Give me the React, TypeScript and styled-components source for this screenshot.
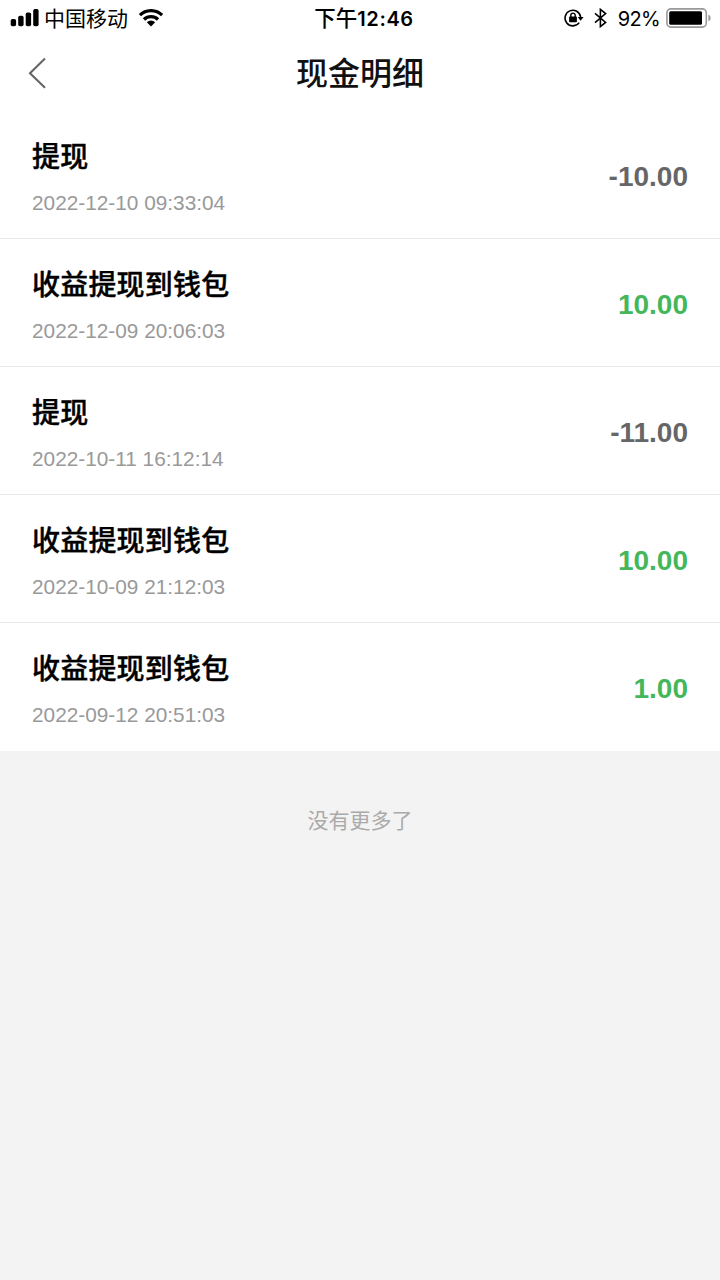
import React from "react";
import styled, { createGlobalStyle } from "styled-components";

const GlobalStyle = createGlobalStyle`
  * { box-sizing: border-box; }
  body {
    margin: 0;
    background: #f3f3f3;
    font-family: "Liberation Sans", "Noto Sans CJK SC", sans-serif;
  }
`;

const Screen = styled.div`
  min-height: 1280px;
  background: #f3f3f3;
`;

const StatusBar = styled.header`
  display: grid;
  grid-template-columns: 1fr auto 1fr;
  grid-template-rows: 36px;
  align-items: center;
  height: 36px;
  padding: 0 9px 0 10px;
  background: #fff;
  color: #000;
  font-family: Inter, "Noto Sans CJK SC", sans-serif;
  font-size: 20px;
  line-height: 36px;
  white-space: nowrap;
`;

const StatusGroup = styled.div<{ $end?: boolean }>`
  display: flex;
  align-items: center;
  height: 36px;
  justify-content: ${(p) => (p.$end ? "flex-end" : "flex-start")};
  svg { display: block; flex: none; }
`;

const Carrier = styled.span`
  margin: 0 10px 0 5px;
  padding-top: 1px;
  font-size: 21px;
`;

const Clock = styled.div`
  padding-left: 7px;
  font-weight: 500;
  font-size: 21.5px;
`;

const ClockDigits = styled.span`
  font-weight: 600;
  font-size: 20px;
  letter-spacing: 0.6px;
`;

const Percent = styled.span`
  margin: 0 6px 0 11px;
  padding-top: 1px;
  font-size: 20px;
  letter-spacing: -0.7px;
`;

const NavBar = styled.nav`
  display: grid;
  grid-template-columns: 80px 1fr 80px;
  align-items: center;
  height: 75px;
  background: #fff;
`;

const BackButton = styled.button`
  display: flex;
  padding: 0 0 0 27px;
  border: 0;
  background: none;
`;

const Heading = styled.h1`
  margin: 0;
  padding-top: 1px;
  color: #111;
  font-size: 32px;
  font-weight: 500;
  line-height: 48px;
  text-align: center;
`;

const List = styled.ul`
  margin: 0;
  padding: 0;
  list-style: none;
  background: #fff;
`;

const Row = styled.li`
  display: flex;
  align-items: center;
  justify-content: space-between;
  height: 128px;
  padding: 0 32px;
  border-bottom: 1px solid #e8e8e8;
  &:last-child { border-bottom-color: #fff; }
`;

const Details = styled.div`
  display: flex;
  flex-direction: column;
  gap: 10px;
  padding-top: 7px;
`;

const Title = styled.span`
  color: #000;
  font-size: 28px;
  font-weight: 500;
  line-height: 40px;
  letter-spacing: 0.2px;
  -webkit-text-stroke: 0.4px #000;
`;

const Time = styled.time`
  color: #999;
  font-size: 20.8px;
  line-height: 30px;
`;

const Amount = styled.span<{ $income: boolean }>`
  padding-top: 4px;
  color: ${(p) => (p.$income ? "#44b75b" : "#666")};
  font-size: 28px;
  font-weight: 700;
  line-height: 40px;
`;

const EndNote = styled.p`
  margin: 0;
  padding-top: 55px;
  color: #aaa;
  font-size: 21px;
  line-height: 30px;
  text-align: center;
`;

const BluetoothSvg = styled.svg`
  margin-left: 10px;
`;

const records = [
  { title: "提现", time: "2022-12-10 09:33:04", amount: "-10.00" },
  { title: "收益提现到钱包", time: "2022-12-09 20:06:03", amount: "10.00" },
  { title: "提现", time: "2022-10-11 16:12:14", amount: "-11.00" },
  { title: "收益提现到钱包", time: "2022-10-09 21:12:03", amount: "10.00" },
  { title: "收益提现到钱包", time: "2022-09-12 20:51:03", amount: "1.00" },
];

const SignalIcon = () => (
  <svg width="29" height="18" viewBox="0 0 29 18">
    <rect x="0.7" y="10" width="5.4" height="7.2" rx="1.8" />
    <rect x="8.2" y="6.7" width="5.4" height="10.5" rx="1.8" />
    <rect x="15.7" y="3.4" width="5.4" height="13.8" rx="1.8" />
    <rect x="23.2" y="0" width="5.4" height="17.2" rx="1.8" />
  </svg>
);

const WifiIcon = () => (
  <svg width="26" height="18" viewBox="0 0 26 18">
    <g fill="none" stroke="#000" strokeWidth="3.3">
      <path d="M1.9 6.2a15.8 15.8 0 0 1 22.2 0" />
      <path d="M6 10.5a10 10 0 0 1 14 0" />
    </g>
    <path d="M8.8 13.3a6 6 0 0 1 8.4 0L13 17.5z" />
  </svg>
);

const RotationLockIcon = () => (
  <svg width="20" height="18" viewBox="0 0 20 18">
    <path d="M15.2 13.6A7.8 7.8 0 1 1 16.6 8" fill="none" stroke="#000" strokeWidth="1.6" />
    <path d="M13.7 8h5.9l-3 3.8z" />
    <rect x="5.1" y="7.6" width="7.8" height="5.6" rx="0.8" />
    <path d="M6.8 8V6.3a2.2 2.2 0 0 1 4.4 0V8" fill="none" stroke="#000" strokeWidth="1.4" />
  </svg>
);

const BluetoothIcon = () => (
  <BluetoothSvg width="13" height="20" viewBox="0 0 13 20">
    <path d="M1 5.3L11.6 14.4L6.4 18.6V1.4L11.6 5.6L1 14.7" fill="none" stroke="#000" strokeWidth="1.6" />
  </BluetoothSvg>
);

const BatteryIcon = () => (
  <svg width="45" height="20" viewBox="0 0 45 20">
    <rect x="0.9" y="0.9" width="39.4" height="18.2" rx="4" fill="none" stroke="#999" strokeWidth="1.6" />
    <rect x="3.2" y="3.2" width="32.8" height="13.6" rx="1.5" />
    <path d="M42.4 6.7c3 1 3 5.6 0 6.6z" fill="#999" />
  </svg>
);

const BackIcon = () => (
  <svg width="20" height="34" viewBox="0 0 20 34">
    <path d="M18 1.6L3 16.2L18 30.8" fill="none" stroke="#666" strokeWidth="2.1" />
  </svg>
);

export default function App() {
  return (
    <Screen>
      <GlobalStyle />
      <StatusBar>
        <StatusGroup>
          <SignalIcon />
          <Carrier>中国移动</Carrier>
          <WifiIcon />
        </StatusGroup>
        <Clock>
          下午<ClockDigits>12:46</ClockDigits>
        </Clock>
        <StatusGroup $end>
          <RotationLockIcon />
          <BluetoothIcon />
          <Percent>92%</Percent>
          <BatteryIcon />
        </StatusGroup>
      </StatusBar>
      <NavBar>
        <BackButton aria-label="返回">
          <BackIcon />
        </BackButton>
        <Heading>现金明细</Heading>
      </NavBar>
      <List>
        {records.map((r) => (
          <Row key={r.time}>
            <Details>
              <Title>{r.title}</Title>
              <Time>{r.time}</Time>
            </Details>
            <Amount $income={!r.amount.startsWith("-")}>{r.amount}</Amount>
          </Row>
        ))}
      </List>
      <EndNote>没有更多了</EndNote>
    </Screen>
  );
}
